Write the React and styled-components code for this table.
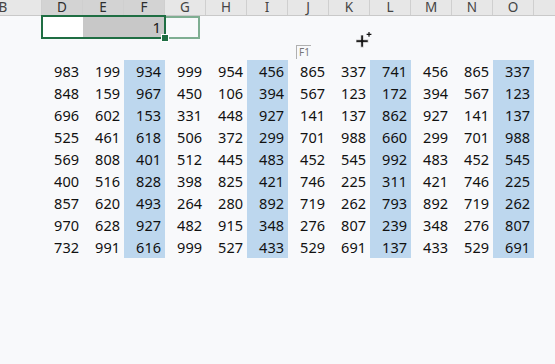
import React from 'react';
import styled, { createGlobalStyle } from 'styled-components';

const GlobalStyle = createGlobalStyle`
  html, body {
    margin: 0;
    padding: 0;
    background: #f8f9fb;
    overflow: hidden;
  }
  body {
    font-family: "Noto Sans", "Open Sans", sans-serif;
    color: #1b1b1b;
  }
`;

const letters = ['B', 'D', 'E', 'F', 'G', 'H', 'I', 'J', 'K', 'L', 'M', 'N', 'O', ''];
const selectedCols = ['D', 'E', 'F'];
const blueCols = [2, 5, 8, 11];

const rows = [
  [983, 199, 934, 999, 954, 456, 865, 337, 741, 456, 865, 337],
  [848, 159, 967, 450, 106, 394, 567, 123, 172, 394, 567, 123],
  [696, 602, 153, 331, 448, 927, 141, 137, 862, 927, 141, 137],
  [525, 461, 618, 506, 372, 299, 701, 988, 660, 299, 701, 988],
  [569, 808, 401, 512, 445, 483, 452, 545, 992, 483, 452, 545],
  [400, 516, 828, 398, 825, 421, 746, 225, 311, 421, 746, 225],
  [857, 620, 493, 264, 280, 892, 719, 262, 793, 892, 719, 262],
  [970, 628, 927, 482, 915, 348, 276, 807, 239, 348, 276, 807],
  [732, 991, 616, 999, 527, 433, 529, 691, 137, 433, 529, 691],
];

const Sheet = styled.div`
  position: relative;
  width: 555px;
  height: 364px;
  overflow: hidden;
`;

const HeaderRow = styled.div`
  display: flex;
  height: 16px;
  box-sizing: border-box;
  background: #e7e7e7;
  border-bottom: 1px solid #c9c9c9;
  margin-left: -35px;
`;

const ColHead = styled.div`
  flex: 0 0 ${p => p.$w}px;
  box-sizing: border-box;
  border-right: 1px solid #cfcfcf;
  background: ${p => (p.$selected ? '#d3d3d3' : 'transparent')};
  color: ${p => (p.$selected ? '#2d2d2d' : '#444')};
  font-size: 13.5px;
  line-height: 15px;
  height: 15px;
  text-align: center;
`;

const SelectRow = styled.div`
  display: flex;
  align-items: flex-start;
  height: 44px;
  padding-left: 41px;
`;

const SelectBox = styled.div`
  position: relative;
  display: flex;
  width: 125px;
  height: 24px;
  box-sizing: border-box;
  margin-top: -1px;
  border: 2px solid #1f6e43;
`;

const SelCell = styled.div`
  flex: 0 0 ${p => p.$w}px;
  background: ${p => (p.$active ? '#ffffff' : '#c8c8c8')};
  font-size: 15px;
  line-height: 20px;
  text-align: right;
  padding-right: ${p => (p.$active ? 0 : 3)}px;
  box-sizing: border-box;
`;

const Handle = styled.div`
  position: absolute;
  right: -5px;
  bottom: -5px;
  width: 6px;
  height: 6px;
  background: #1f6e43;
  border: 1px solid #ffffff;
`;

const GhostBox = styled.div`
  width: 35px;
  height: 23px;
  box-sizing: border-box;
  margin-left: -1px;
  border: 2px solid #7fae92;
  border-left: none;
`;

const Grid = styled.div`
  display: grid;
  grid-template-columns: repeat(12, 41px);
  grid-auto-rows: 22px;
  margin-left: 42px;
`;

const Cell = styled.div`
  background: ${p => (p.$blue ? '#bdd7ee' : 'transparent')};
  font-size: 14.5px;
  line-height: 22px;
  text-align: right;
  padding-right: 4px;
  color: #111;
`;

const Tip = styled.div`
  position: absolute;
  left: 296px;
  top: 45px;
  padding: 0 1px 0 2px;
  border-left: 1px solid #b0b0b0;
  border-top: 1px solid #b0b0b0;
  font-size: 10px;
  line-height: 13px;
  color: #777;
`;

const Cursor = styled.svg`
  position: absolute;
  left: 355px;
  top: 31px;
`;

export default function App() {
  return (
    <Sheet>
      <GlobalStyle />
      <HeaderRow>
        {letters.map((l, i) => (
          <ColHead key={i} $w={i === 0 ? 77 : 41} $selected={selectedCols.includes(l)}>
            {l}
          </ColHead>
        ))}
      </HeaderRow>
      <SelectRow>
        <SelectBox>
          <SelCell $w={40} $active />
          <SelCell $w={81}>1</SelCell>
          <Handle />
        </SelectBox>
        <GhostBox />
      </SelectRow>
      <Grid>
        {rows.map((r, ri) =>
          r.map((v, ci) => (
            <Cell key={`${ri}-${ci}`} $blue={blueCols.includes(ci)}>
              {v}
            </Cell>
          ))
        )}
      </Grid>
      <Tip>F1</Tip>
      <Cursor width="18" height="18" viewBox="0 0 18 18">
        <path d="M5.8 4h2.6v4.8h4.8v2.6H8.4v4.8H5.8v-4.8H1v-2.6h4.8z" fill="#111" stroke="#fff" strokeWidth="0.7" />
        <path d="M13.4 1h1.2v1.8h1.8v1.2h-1.8v1.8h-1.2V4h-1.8V2.8h1.8z" fill="#111" />
      </Cursor>
    </Sheet>
  );
}
